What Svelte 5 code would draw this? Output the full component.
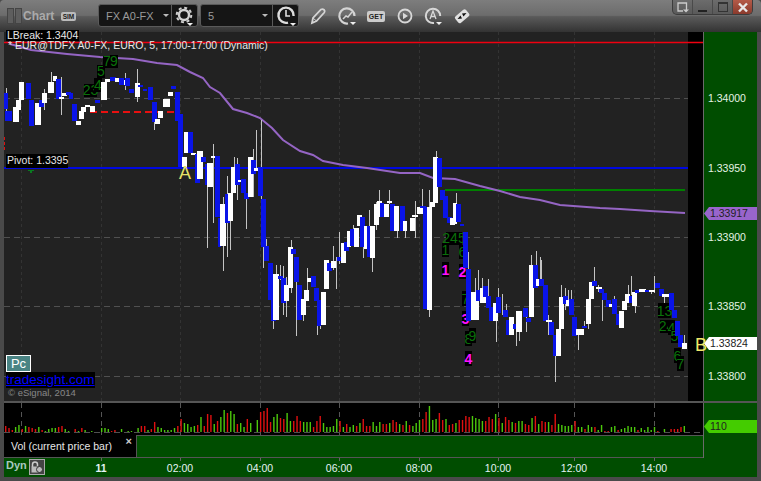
<script>
  const W = 0, B = 1;
  // [x1, x2, top, bottom, colour]
  const bodies = [
    [4,8,93,109,B],[5,12,111,121,B],[13,19,107,122,W],[16,21,100,110,W],[19,24,82,100,W],[26,31,83,99,B],[29,34,100,126,B],
    [35,41,103,125,W],[39,44,100,107,B],[42,47,93,103,W],[48,54,82,93,W],[53,57,76,81,W],[56,61,79,99,B],[59,64,97,99,W],
    [62,67,93,96,W],[66,71,92,95,B],[69,73,93,99,B],[72,77,104,121,B],[76,81,121,125,W],[79,84,111,119,W],[81,86,107,112,W],
    [85,90,105,107,W],[90,95,106,112,W],[95,100,100,103,B],[101,107,82,100,W],[105,110,79,82,W],[110,116,77,81,B],[115,120,78,82,W],
    [119,124,78,85,B],[124,129,80,85,W],[125,130,78,86,B],[129,134,89,93,B],[135,140,83,97,W],[138,143,85,87,B],[143,147,89,91,B],
    [148,153,87,100,B],[152,157,102,122,B],[155,160,119,124,W],[158,163,111,118,W],[163,170,99,107,W],[168,173,92,96,W],[171,176,86,89,B],
    [175,180,92,121,B],[178,183,114,167,B],[182,187,157,167,W],[184,189,132,153,W],[188,193,132,153,B],[191,196,153,155,W],
    [195,200,154,183,B],[197,203,151,179,W],[201,206,157,162,B],[205,208,164,185,B],[207,213,163,187,W],[211,215,156,158,W],
    [215,220,156,217,B],[218,221,218,247,B],[220,226,204,246,W],[225,230,194,223,B],[228,233,193,221,W],[231,236,167,193,W],
    [235,240,164,185,B],[238,242,180,182,W],[241,246,179,193,B],[244,249,193,199,B],[248,253,157,197,W],[251,256,160,174,B],
    [254,258,168,171,W],[258,263,167,196,B],[261,266,199,247,B],[264,269,246,261,B],[268,273,263,300,B],[271,276,282,321,B],
    [273,279,274,320,W],[278,283,276,279,B],[281,286,278,303,B],[284,289,285,301,W],[288,293,247,288,W],[291,296,249,254,B],
    [294,299,257,282,B],[297,302,285,320,B],[301,306,299,315,W],[304,309,290,301,W],[307,311,278,282,W],[311,316,276,287,B],
    [314,319,288,301,B],[317,321,300,326,B],[321,326,292,325,W],[324,329,260,289,W],[327,332,263,271,B],[331,336,261,268,W],
    [337,341,257,261,B],[341,346,243,263,W],[344,349,242,251,B],[347,351,231,247,W],[350,354,229,246,B],[354,359,228,247,W],
    [357,362,215,226,W],[360,365,217,247,B],[364,367,226,249,W],[367,371,226,257,B],[370,375,226,258,W],[374,379,204,225,W],
    [377,382,201,217,W],[380,384,203,217,B],[384,389,204,217,W],[387,392,201,203,W],[390,395,204,231,B],[394,399,206,231,W],
    [400,405,206,231,B],[403,407,221,231,W],[410,415,218,231,W],[412,418,215,217,W],[417,423,207,214,W],[420,426,206,208,B],
    [423,427,207,309,B],[427,432,207,310,W],[430,435,202,207,W],[433,438,157,203,W],[437,442,158,187,B],[440,445,190,200,B],
    [443,448,196,218,B],[447,452,217,223,B],[450,455,218,225,W],[453,457,203,224,W],[456,461,204,222,B],[460,464,224,226,B],
    [463,468,232,268,B],[466,471,269,321,B],[471,475,292,320,W],[473,479,292,320,W],[476,480,290,301,B],[480,486,288,303,W],
    [483,488,286,297,B],[486,491,296,308,B],[489,493,307,321,B],[493,498,303,321,W],[496,501,297,313,B],[503,508,310,317,B],
    [506,509,320,335,B],[509,514,317,335,W],[513,516,324,329,B],[516,522,311,332,W],[523,528,308,317,B],[526,531,318,322,B],
    [529,534,265,317,W],[533,538,265,288,B],[536,539,279,286,W],[539,544,279,286,B],[543,548,285,321,B],[546,552,320,322,W],
    [549,554,322,335,B],[553,556,335,356,B],[556,561,329,356,W],[559,564,297,329,W],[563,568,296,304,B],[566,570,300,306,W],
    [569,574,299,315,B],[572,577,317,336,B],[576,584,329,335,W],[582,587,326,328,B],[586,591,299,324,W],[589,594,282,299,W],
    [592,597,281,286,B],[596,602,287,289,W],[599,604,289,293,B],[602,607,293,300,B],[606,611,300,307,B],[609,612,304,307,W],
    [612,617,299,314,B],[616,619,314,325,B],[619,624,311,328,W],[622,627,301,310,W],[625,630,294,303,W],[629,632,296,303,B],
    [632,637,292,306,W],[635,639,290,293,B],[639,646,289,292,W],[645,649,290,292,B],[649,655,290,292,W],[655,660,283,288,B],
    [659,664,289,296,B],[662,669,294,297,W],[669,674,293,310,B],[672,677,310,318,B],[675,680,321,336,B],[678,683,335,347,B],[682,687,343,349,W]
  ];
  // [x, top, bottom]
  const wicks = [
    [6,88,113],[44,89,110],[51,72,93],[61,77,115],[125,73,90],[137,69,102],[154,122,130],[182,121,157],[207,168,248],[213,144,223],
    [223,197,271],[227,176,257],[230,193,250],[234,157,193],[237,158,200],[246,199,229],[253,149,197],[256,130,170],[261,120,201],
    [263,247,268],[266,239,250],[273,320,329],[276,265,282],[280,265,280],[283,266,315],[286,277,317],[291,240,293],[296,282,336],
    [303,315,321],[307,268,293],[317,301,335],[320,326,329],[333,246,270],[336,257,289],[339,232,264],[353,225,232],[363,247,258],
    [369,210,226],[372,258,272],[376,202,230],[379,190,204],[389,190,204],[397,231,238],[405,231,238],[415,201,238],[422,189,207],
    [429,190,207],[429,310,317],[436,151,203],[456,193,203],[468,252,269],[475,278,320],[478,270,320],[482,278,290],[488,279,296],
    [496,303,342],[498,288,300],[502,294,315],[506,304,310],[516,329,346],[519,332,341],[526,317,332],[531,255,267],[536,251,265],
    [540,257,279],[541,260,280],[548,315,335],[555,356,382],[561,285,297],[565,288,310],[568,290,300],[571,290,299],[578,335,350],
    [584,321,328],[588,324,329],[594,267,282],[602,293,321],[598,285,292],[614,296,301],[628,285,295],[631,276,295],[635,306,313],[651,290,294],[654,276,293],
    [664,297,310],[684,335,343]
  ];
  const purple = "10,44 31,50 67,54 100,57 133,59 157,63 177,65 190,72 203,78 210,87 220,93 233,109 247,113 260,118 272,128 283,140 300,151 313,155 323,161 343,165 367,168 400,173 420,173 433,178 455,179 480,186 500,191 520,197 540,200 560,205 600,208 620,209 650,211 685,213";
  const hours = [21.5, 101.5, 180.5, 260.5, 339.5, 419.5, 498.5, 574.5, 654.5];
  const levels = [98, 237, 306, 376];
  // [x, y, width, height, text, pink]
  const marks = [
    [84,84,13,13,"23",0],[94,78,8,14,"4",0],[97,65,8,13,"5",0],[103,56,8,12,"7",0],[110,55,8,13,"9",0],
    [446,232,16,13,"245",0],[442,243,7,14,"1",0],[459,245,7,14,"6",0],[442,262,7,15,"1",1],[459,264,7,15,"2",1],
    [462,291,7,15,"7",0],[462,311,7,15,"3",1],[465,331,7,15,"8",0],[469,328,7,15,"9",0],[465,351,7,15,"4",1],
    [658,303,13,15,"13",0],[660,320,13,13,"24",0],[668,320,7,15,"4",0],[671,330,7,13,"5",0],[674,348,7,15,"6",0],[677,356,7,15,"7",0]
  ];
  // signed heights: positive green, negative red
  const volA = [-6,-4,-2,5,7,-3,6,-5,-4,-3,5,-2,1,3,4,4,-5,-6,3,1,0,-3,1,-4,2,0,1,0,0,4,4,3,-1,-2,0,3,0,1,1,0,4,-6,-6,2,-3,-10,5,4,2,2,2,4,-6,-13,9,8,5,6,-7,15,-6,-18,-17,8,-11,15,22,-19,21,18,-8,9,5,-13];
  const volB = [9,0,12,-20,-21,-24,-10,15,18,-14,-13,19,11,-11,-16,-11,10,10,10,-5,-11,-16,9,5,5,6,13,-11,5,-8,5,7,-6,9,-13,-6,-6,10,6,10,-8,-8,9,-12,-10,8,-7,11,-7,6,9,12,-13,-20,26,12,13,-19,-12,13,-7,-8,9,-12,-12,-16,-15,16,14,13,11,-11,-15,-13,18,-14,9,-15,-12,10,-9,11,11,-8,-7,14,-16,8,-11,-10,10,-7,-18,8,7,6,6,7,-11,5,5,-3,7,5,-5,2,7,-1,-1,5,6,-2,3,4,6,5,5,-2,4,2,5,2,5,-1,0,3,0,-3,-3,-3,-5,6];
  const bars = [
    ...volA.map((h, i) => ({ x: 5 + i * 3.31, h })),
    ...volB.map((h, i) => ({ x: 250 + i * 3.31, h }))
  ].filter((b) => b.h !== 0);
  const priceLabels = [["1.34000", 98], ["1.33950", 168], ["1.33900", 237], ["1.33850", 306], ["1.33800", 376]];
  const times = [["11", 101, true], ["02:00", 180], ["04:00", 260], ["06:00", 339], ["08:00", 419], ["10:00", 498], ["12:00", 574], ["14:00", 654]];
</script>

<div class="app">
  <header class="titlebar">
    <span class="grip"></span><span class="grip"></span>
    <span class="title">Chart</span>
    <span class="sim">SIM</span>
    <div class="combo symbol">
      <span class="value">FX A0-FX</span><span class="caret"></span>
      <span class="seg">
        <svg width="22" height="22" viewBox="0 0 22 22">
          <circle cx="10" cy="10" r="7.300" fill="none" stroke="#d0d0d0" stroke-width="2" stroke-dasharray="3 2.730"/>
          <circle cx="10" cy="10" r="5" fill="none" stroke="#d0d0d0" stroke-width="2.400"/>
          <path d="M13 18h6l-3 3z" fill="#eee"/>
        </svg>
      </span>
    </div>
    <div class="combo interval">
      <span class="value">5</span><span class="caret"></span>
      <span class="seg">
        <svg width="24" height="22" viewBox="0 0 24 22">
          <path d="M14 17.6A7.6 7.6 0 1 1 19.6 11" fill="none" stroke="#ddd" stroke-width="2.4"/>
          <path d="M12 5v6h4" fill="none" stroke="#ddd" stroke-width="1.6"/>
          <path d="M16 18h6l-3 3z" fill="#eee"/>
        </svg>
      </span>
    </div>
    <div class="tools">
      <svg width="17" height="18" viewBox="0 0 17 18"><path d="M2 16l1-5L11 2.500q1.500-1 3 .2q1.300 1.500.3 2.800L6.500 14z" fill="none" stroke="#d4d4d4" stroke-width="1.800"/><path d="M3 11l3.500 3" stroke="#d4d4d4"/></svg>
      <svg width="20" height="20" viewBox="1 0 20 20"><path d="M12 17.500A7.600 7.600 0 1 1 18.500 10" fill="none" stroke="#d4d4d4" stroke-width="2.200"/><path d="M7 13l3-3 2 1 4-5" fill="none" stroke="#d4d4d4" stroke-width="1.500"/><path d="M14 16h6l-3 3z" fill="#eee"/></svg>
      <span class="get">GET</span>
      <svg class="play" width="16" height="16" viewBox="0 0 16 16"><circle cx="8" cy="8" r="6.500" fill="none" stroke="#d8d8d8" stroke-width="1.800"/><path d="M6 4.800l5 3.200-5 3.200z" fill="#d8d8d8"/></svg>
      <svg width="20" height="20" viewBox="0 0 20 20"><path d="M11 17A7.200 7.200 0 1 1 17.200 10" fill="none" stroke="#d8d8d8" stroke-width="2"/><path d="M7 13l3-8 3 8M8 10.500h4" fill="none" stroke="#d8d8d8" stroke-width="1.300"/><path d="M13 16h6l-3 3z" fill="#eee"/></svg>
      <svg width="18" height="18" viewBox="0 0 18 18"><rect x="2" y="5" width="14" height="8.500" rx="2" transform="rotate(-40 9 9)" fill="#e0e0e0"/><path d="M4.500 12l3-3.500 1.500 3zM13.500 6l-3 3.500-1.500-3z" fill="#111"/></svg>
    </div>
    <div class="winbtns">
      <span class="wb">
        <svg width="15" height="13" viewBox="0 0 15 13"><path d="M11.500 9V2H3v8h5" fill="none" stroke="#ccc" stroke-width="1.300"/><path d="M8 8.500h6l-3 3z" fill="#ccc"/></svg>
      </span>
      <span class="wb"><i class="minus"></i></span>
      <span class="wb"><i class="square"></i></span>
      <span class="wb close">
        <svg width="12" height="11" viewBox="0 0 12 11"><path d="M2 1.500l8 8M10 1.500l-8 8" stroke="#e8e8e8" stroke-width="2.400"/></svg>
      </span>
    </div>
  </header>

  <main class="main">
    <div class="price">
      <svg class="canvas" width="699" height="369" viewBox="4 32 699 369">
        <rect x="4" y="32" width="684" height="369" fill="#222"/>
        <rect x="688" y="32" width="15" height="369" fill="#000"/>
        {#each hours as x}
          <line x1={x} x2={x} y1="32" y2="401" class="vgrid"/>
        {/each}
        {#each levels as y}
          <line x1="4" x2="688" y1={y + 0.5} y2={y + 0.5} class="hgrid"/>
        {/each}
        <line x1="4" x2="703" y1="42.500" y2="42.500" stroke="#f00010" stroke-width="1.500"/>
        <line x1="4" x2="688" y1="168" y2="168" stroke="#0008e0" stroke-width="2"/>
        <line x1="445" x2="685" y1="190" y2="190" stroke="#008000" stroke-width="2"/>
        <line x1="90" x2="175" y1="112" y2="112" stroke="#e81010" stroke-width="2" stroke-dasharray="7 4"/>
        <line x1="4.500" x2="4.500" y1="137" y2="150" stroke="#e01010" stroke-dasharray="3 2"/>
        <path d="M28 170h6v1h-2v2h-2v-2h-2z" fill="#0a7a20"/>
        <polyline points={purple} fill="none" stroke="#9565c4" stroke-width="2"/>
        {#each wicks as [x, y1, y2]}
          <line x1={x + 0.5} x2={x + 0.5} {y1} {y2} stroke="#c4c4c4"/>
        {/each}
        {#each marks as [x, y, w, h, t, pink]}
          <rect {x} {y} width={w} height={h} fill="#000"/>
          <text x={x + w / 2} y={y + h - 2} class={pink ? "mark pink" : "mark"}>{t}</text>
        {/each}
        {#each bodies as [x1, x2, y1, y2, c]}
          <rect x={x1} y={y1} width={x2 - x1} height={y2 - y1} fill={c ? "#0a14e8" : "#fff"}/>
        {/each}
        <text x="179" y="179" class="letter">A</text>
      </svg>
      <span class="note lbreak">LBreak: 1.3404</span>
      <span class="note study">* EUR@TDFX A0-FX, EURO, 5, 17:00-17:00 (Dynamic)</span>
      <span class="note pivot">Pivot: 1.3395</span>
      <span class="pc">Pc</span>
      <span class="site">tradesight.com</span>
      <span class="copy">© eSignal, 2014</span>
    </div>

    <div class="axis">
      {#each priceLabels as [t, y]}
        <span class="tick" style="top:{y - 39}px">{t}</span>
      {/each}
      <span class="tag purple">1.33917</span>
      <span class="tag white">1.33824</span>
      <span class="bee">B</span>
    </div>

    <div class="sep"></div>

    <div class="vol">
      <svg class="canvas" width="699" height="32" viewBox="4 403 699 32">
        {#each hours as x}
          <line x1={x} x2={x} y1="403" y2="435" class="vgrid strong"/>
        {/each}
        <line x1="4" x2="703" y1="432.500" y2="432.500" class="hgrid"/>
        {#each bars as b}
          <rect x={b.x} y={432 - Math.abs(b.h)} width="1.400" height={Math.abs(b.h)} fill={b.h > 0 ? "#4cc80c" : "#e01010"}/>
        {/each}
      </svg>
    </div>

    <div class="volaxis">
      <span class="tag lime">110</span>
    </div>

    <div class="legend">
      <div class="legendlabel">
        <span>Vol (current price bar)</span>
        <b>×</b>
      </div>
      <div class="legendrest"></div>
    </div>

    <div class="time">
      <span class="dyn">Dyn</span>
      <span class="lock">
        <svg width="14" height="14" viewBox="0 0 14 14"><path d="M2.500 7V4.500a2.500 2.500 0 0 1 5 0V6" fill="none" stroke="#ccc" stroke-width="1.500"/><rect x="1.500" y="6.500" width="7" height="6" fill="#bbb"/><circle cx="9.500" cy="9.500" r="3" fill="#bbb" stroke="#333"/></svg>
      </span>
      {#each times as [t, x, bold]}
        <i class="hour" style="left:{x - 4}px"></i>
        <span class="when" class:bold style="left:{x - 4}px">{t}</span>
      {/each}
    </div>
  </main>
</div>

<style>
  :global(body) { margin: 0; background: #4a4a4a; }
  .app {
    width: 761px; height: 481px; overflow: hidden;
    display: flex; flex-direction: column;
    background: #4a4a4a;
    font-family: "Liberation Sans", Arial, sans-serif;
    font-size: 10.500px;
  }
  .titlebar {
    height: 32px; flex: none; display: flex; align-items: center;
    padding-left: 7px; position: relative;
    background: linear-gradient(#7d7d7d 0, #6c6c6c 48%, #5a5a5a 52%, #333 100%);
    border-radius: 4px 4px 0 0;
  }
  .grip { width: 5px; height: 14px; border: 1px solid #444; background: #5e5e5e; margin-right: 1px; }
  .title { color: #aaa; font-weight: bold; font-size: 12px; width: 38px; }
  .sim {
    width: 15px; height: 9px; background: #bbb; color: #222; border-radius: 2px;
    font-size: 6.500px; font-weight: bold; line-height: 9px; text-align: center; margin-right: 22px;
  }
  .combo {
    height: 21px; display: flex; align-items: center; background: #151515;
    border: 1px solid #5a5a5a; border-radius: 3px; margin-right: 2px; box-sizing: content-box;
    margin-top: -1px;
  }
  .symbol { width: 98px; }
  .interval { width: 97px; }
  .value { color: #9a9a9a; font-size: 11px; padding-left: 7px; }
  .symbol .value { width: 51px; white-space: nowrap; }
  .interval .value { width: 51px; }
  .caret { width: 0; height: 0; border: 3px solid transparent; border-top: 3px solid #bbb; margin: 3px 0 0 6px; }
  .interval .caret { margin-left: 3px; }
  .seg {
    margin-left: auto; border-left: 1px solid #5a5a5a; height: 21px; width: 25px;
    display: flex; align-items: center; justify-content: center;
  }
  .tools { display: flex; align-items: center; margin-left: 9px; gap: 10px; }
  .play { margin-left: 2px; }
  .get {
    width: 18px; height: 11px; background: #ccc; color: #222; border-radius: 2px;
    font-size: 7px; font-weight: bold; line-height: 11px; text-align: center;
  }
  .winbtns {
    position: absolute; right: 8px; top: 0; height: 14px; display: flex;
    border: 1px solid #3c3c3c; border-top: 0; border-radius: 0 0 5px 5px; overflow: hidden;
    background: linear-gradient(#6c6c6c, #5a5a5a);
  }
  .wb { width: 19px; height: 14px; border-left: 1px solid #4a4a4a; display: flex; align-items: center; justify-content: center; }
  .wb:first-child { border-left: 0; }
  .close { background: linear-gradient(#b45a48, #8a3a2c); }
  .minus { width: 9px; height: 2px; background: #222; margin-top: 7px; }
  .square { width: 8px; height: 7px; border: 1px solid #333; border-top-width: 2px; }

  .main {
    flex: 1; min-height: 0; margin: 0 4px 4px;
    display: grid; background: #004d00;
    grid-template-columns: 699px 1fr;
    grid-template-rows: 369px 2px 32px 23px 1fr;
  }
  .price { position: relative; }
  .canvas { display: block; }
  .vgrid { stroke: #333; stroke-dasharray: 3 3; }
  .vgrid.strong { stroke: #555; stroke-dasharray: 5 4; }
  .hgrid { stroke: #505050; stroke-dasharray: 6 4; }
  .mark { font-size: 14px; fill: #0a700a; text-anchor: middle; }
  .mark.pink { fill: #ff10ff; font-weight: bold; }
  .letter { font-size: 18px; fill: #e6e268; }
  .note { position: absolute; left: 2px; color: #e8e8e8; background: #000; white-space: nowrap; line-height: 11px; }
  .lbreak { top: -2px; padding: 0 1px; }
  .study { top: 8px; left: 4px; background: none; }
  .pivot { top: 122px; left: 2px; padding: 1px 0 2px 1px; }
  .pc {
    position: absolute; left: 2px; top: 323px; width: 23px; height: 15px;
    border: 1px solid #fff; background: #4a8484; color: #fff; font-size: 13px; line-height: 15px; text-align: center;
  }
  .site {
    position: absolute; left: 2px; top: 340px; background: #000; color: #0000ff;
    font-size: 13.500px; line-height: 16px; text-decoration: underline;
  }
  .copy { position: absolute; left: 4px; top: 355px; color: #888; font-size: 9.500px; }

  .axis, .volaxis { position: relative; border-left: 1px solid #6a6a6a; }
  .tick { position: absolute; left: 4px; color: #e4f4e4; line-height: 14px; }
  .tag {
    position: absolute; left: 0; width: 53px; height: 13px; box-sizing: border-box; padding-left: 6px;
    clip-path: polygon(0 50%, 5px 0, 100% 0, 100% 100%, 5px 100%); line-height: 13px; color: #222;
  }
  .purple { top: 175px; background: #9865cc; }
  .white { top: 305px; background: #fff; }
  .lime { top: 17px; background: #44cc00; }
  .bee { position: absolute; left: -9px; top: 304px; font-size: 18px; line-height: 18px; color: #f0e868; z-index: 1; }
  .sep { grid-column: 1 / 3; background: #555; }
  .vol { background: #000; }
  .volaxis { grid-row: 3 / 5; grid-column: 2; }
  .legend { display: flex; }
  .legendlabel {
    width: 132px; background: #000; color: #e8e8e8; display: flex; justify-content: space-between;
    align-items: center; padding: 0 4px 0 7px; box-sizing: border-box; border-bottom: 1px solid #555;
    font-size: 10.500px;
  }
  .legendlabel b { align-self: flex-start; color: #ccc; line-height: 12px; font-size: 11px; }
  .legendrest { flex: 1; border-top: 1px solid #555; border-left: 1px solid #555; border-bottom: 1px solid #555; }
  .time { grid-column: 1 / 3; position: relative; }
  .dyn { position: absolute; left: 2px; top: 1px; color: #a8c8c0; font-size: 11px; font-weight: bold; }
  .lock {
    position: absolute; left: 25px; top: 1px; width: 14px; height: 14px; border: 1px solid #aaa;
    background: #444; display: flex;
  }
  .hour { position: absolute; top: 0; width: 1px; height: 3px; background: #666; }
  .when { position: absolute; top: 4px; transform: translateX(-50%); color: #e4f4f4; line-height: 13px; }
  .bold { font-weight: bold; }
</style>
